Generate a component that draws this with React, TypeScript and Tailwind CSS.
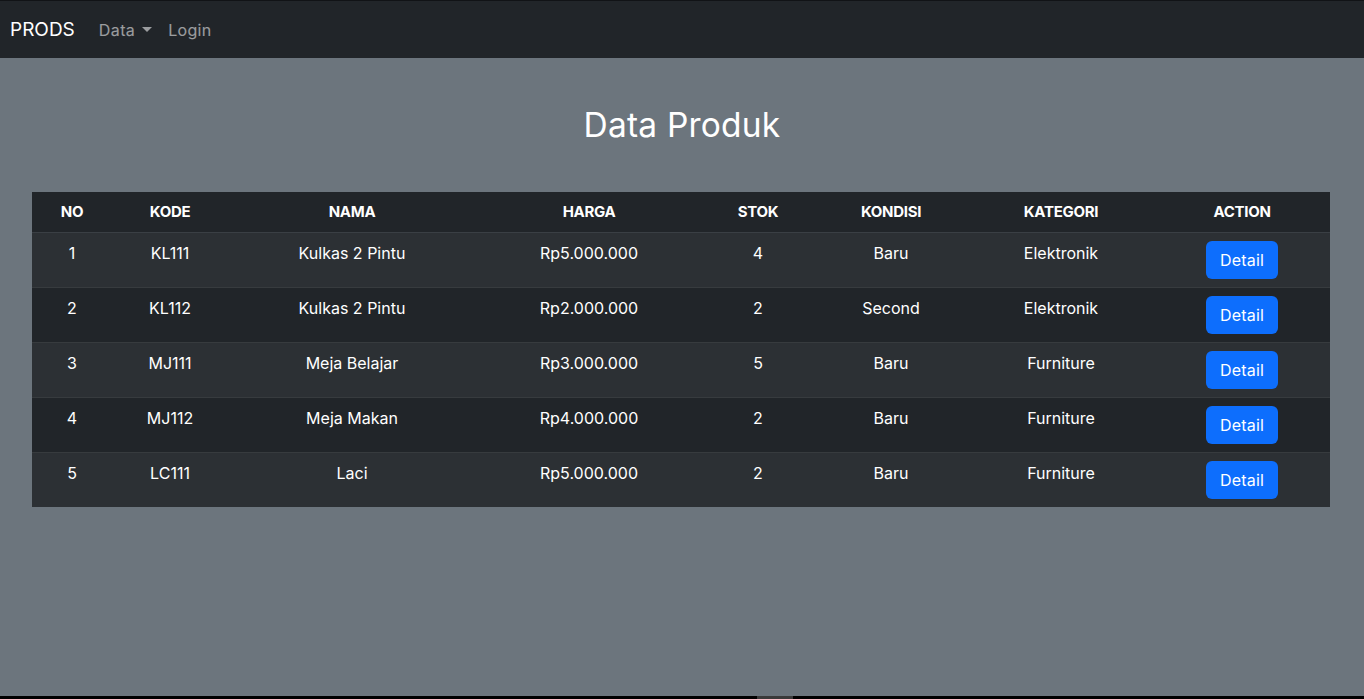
const PRODUCTS = [
  { no: 1, kode: "KL111", nama: "Kulkas 2 Pintu", harga: "Rp5.000.000", stok: 4, kondisi: "Baru", kategori: "Elektronik" },
  { no: 2, kode: "KL112", nama: "Kulkas 2 Pintu", harga: "Rp2.000.000", stok: 2, kondisi: "Second", kategori: "Elektronik" },
  { no: 3, kode: "MJ111", nama: "Meja Belajar", harga: "Rp3.000.000", stok: 5, kondisi: "Baru", kategori: "Furniture" },
  { no: 4, kode: "MJ112", nama: "Meja Makan", harga: "Rp4.000.000", stok: 2, kondisi: "Baru", kategori: "Furniture" },
  { no: 5, kode: "LC111", nama: "Laci", harga: "Rp5.000.000", stok: 2, kondisi: "Baru", kategori: "Furniture" },
];

const HEADERS = ["NO", "KODE", "NAMA", "HARGA", "STOK", "KONDISI", "KATEGORI", "ACTION"];
const WIDTHS = ["w-[80px]", "w-[116px]", "w-[248px]", "w-[226px]", "w-[112px]", "w-[154px]", "w-[186px]", "w-[176px]"];

function Navbar() {
  return (
    <nav className="h-[58px] bg-[#212529] border-t border-[#111316] flex items-center px-[10px]">
      <a href="#" className="text-[19px] text-white mr-4 leading-[30px]">PRODS</a>
      <a href="#" className="px-2 text-[16px] text-white/55 flex items-center tracking-[0.4px]">
        Data
        <span className="ml-[7px] w-0 h-0 border-l-[5px] border-r-[5px] border-t-[5px] border-l-transparent border-r-transparent border-t-white/55" />
      </a>
      <a href="#" className="px-2 text-[16px] text-white/55 tracking-[0.3px]">Login</a>
    </nav>
  );
}

export default function App() {
  return (
    <div className="min-h-screen flex flex-col bg-[#6c757d] font-['Inter','Noto_Sans',sans-serif]">
      <Navbar />
      <main className="flex-1">
        <h2 className="mt-[47px] text-center text-[33.5px] leading-[40px] font-normal text-white tracking-[0.2px]">
          Data Produk
        </h2>
        <table className="mt-[47px] ml-[32px] w-[1298px] border-collapse text-center text-white text-[16px]">
          <thead>
            <tr className="bg-[#212529] border-b border-[#3a3f44]">
              {HEADERS.map((h, i) => (
                <th key={h} className={`${WIDTHS[i]} py-2 leading-6 font-bold text-[15px] tracking-[-0.3px]`}>
                  {h}
                </th>
              ))}
            </tr>
          </thead>
          <tbody>
            {PRODUCTS.map((p, i) => (
              <tr
                key={p.no}
                className={`${i % 2 === 0 ? "bg-[#2c3034]" : "bg-[#212529]"} ${i < PRODUCTS.length - 1 ? "border-b border-[#373b3e]" : ""} align-top`}
              >
                <td className="py-2 leading-6">{p.no}</td>
                <td className="py-2 leading-6">{p.kode}</td>
                <td className="py-2 leading-6">{p.nama}</td>
                <td className="py-2 leading-6">{p.harga}</td>
                <td className="py-2 leading-6">{p.stok}</td>
                <td className="py-2 leading-6">{p.kondisi}</td>
                <td className="py-2 leading-6">{p.kategori}</td>
                <td className="pt-[8px] pb-[8px] leading-none">
                  <button className="align-top h-[38px] px-[14px] rounded-[6px] bg-[#0d6efd] text-white text-[16px] leading-6 tracking-[0.2px]">
                    Detail
                  </button>
                </td>
              </tr>
            ))}
          </tbody>
        </table>
      </main>
      <div className="h-[3px] bg-black flex">
        <div className="ml-[757px] w-[36px] bg-[#3a3a3a]" />
      </div>
    </div>
  );
}
